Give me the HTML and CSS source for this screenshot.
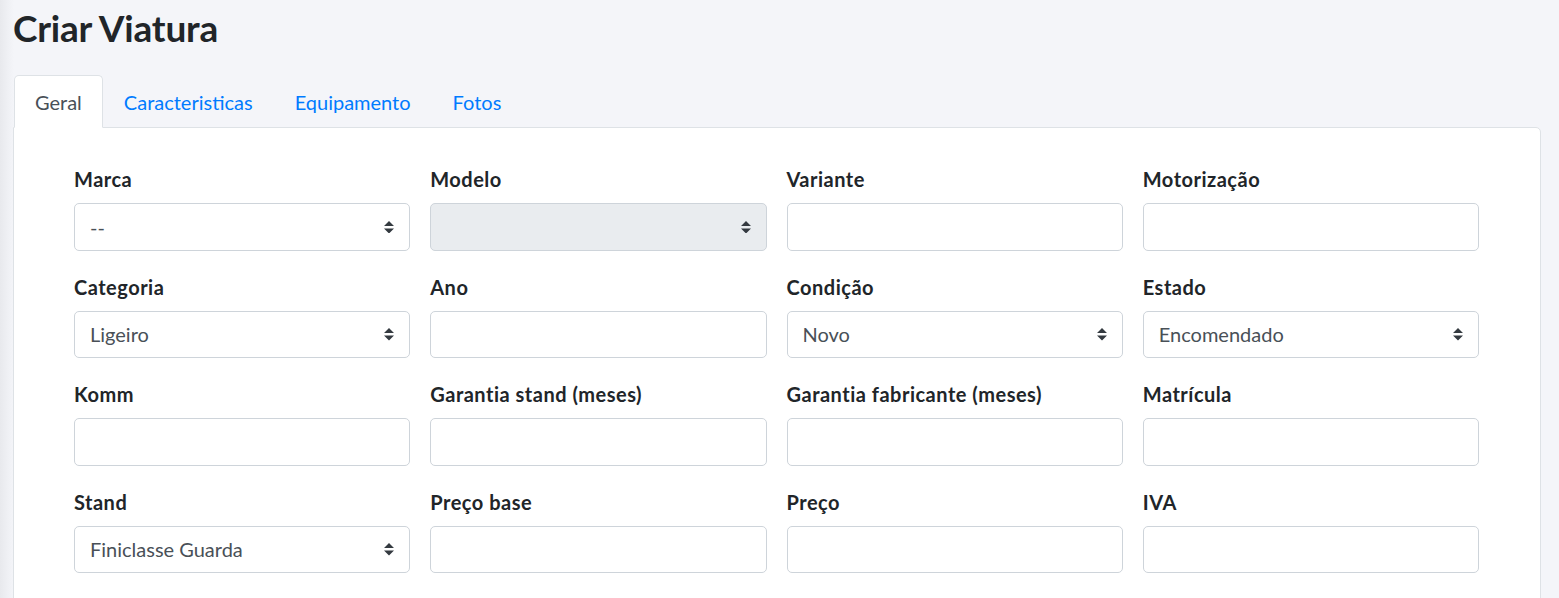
FILE: index.html
```html
<!DOCTYPE html>
<html lang="pt">
<head>
<meta charset="utf-8">
<title>Criar Viatura</title>
<link rel="stylesheet" href="styles.css">
</head>
<body>
<div class="page">
  <h2 class="title">Criar Viatura</h2>
  <ul class="tabs">
    <li class="tab active">Geral</li>
    <li class="tab">Caracteristicas</li>
    <li class="tab">Equipamento</li>
    <li class="tab">Fotos</li>
  </ul>
  <div class="card">
    <div class="grid">
      <div class="group">
        <label class="label">Marca</label>
        <div class="control select"><span>--</span><svg class="caret" viewBox="0 0 4 5" width="10" height="12.5"><path fill="#343a40" d="M2 0L0 2h4zm0 5L0 3h4z"/></svg></div>
      </div>
      <div class="group">
        <label class="label">Modelo</label>
        <div class="control select disabled"><span></span><svg class="caret" viewBox="0 0 4 5" width="10" height="12.5"><path fill="#343a40" d="M2 0L0 2h4zm0 5L0 3h4z"/></svg></div>
      </div>
      <div class="group">
        <label class="label">Variante</label>
        <div class="control"></div>
      </div>
      <div class="group">
        <label class="label">Motorização</label>
        <div class="control"></div>
      </div>

      <div class="group">
        <label class="label">Categoria</label>
        <div class="control select"><span>Ligeiro</span><svg class="caret" viewBox="0 0 4 5" width="10" height="12.5"><path fill="#343a40" d="M2 0L0 2h4zm0 5L0 3h4z"/></svg></div>
      </div>
      <div class="group">
        <label class="label">Ano</label>
        <div class="control"></div>
      </div>
      <div class="group">
        <label class="label">Condição</label>
        <div class="control select"><span>Novo</span><svg class="caret" viewBox="0 0 4 5" width="10" height="12.5"><path fill="#343a40" d="M2 0L0 2h4zm0 5L0 3h4z"/></svg></div>
      </div>
      <div class="group">
        <label class="label">Estado</label>
        <div class="control select"><span>Encomendado</span><svg class="caret" viewBox="0 0 4 5" width="10" height="12.5"><path fill="#343a40" d="M2 0L0 2h4zm0 5L0 3h4z"/></svg></div>
      </div>

      <div class="group">
        <label class="label">Komm</label>
        <div class="control"></div>
      </div>
      <div class="group">
        <label class="label">Garantia stand (meses)</label>
        <div class="control"></div>
      </div>
      <div class="group">
        <label class="label">Garantia fabricante (meses)</label>
        <div class="control"></div>
      </div>
      <div class="group">
        <label class="label">Matrícula</label>
        <div class="control"></div>
      </div>

      <div class="group">
        <label class="label">Stand</label>
        <div class="control select"><span>Finiclasse Guarda</span><svg class="caret" viewBox="0 0 4 5" width="10" height="12.5"><path fill="#343a40" d="M2 0L0 2h4zm0 5L0 3h4z"/></svg></div>
      </div>
      <div class="group">
        <label class="label">Preço base</label>
        <div class="control"></div>
      </div>
      <div class="group">
        <label class="label">Preço</label>
        <div class="control"></div>
      </div>
      <div class="group">
        <label class="label">IVA</label>
        <div class="control"></div>
      </div>
    </div>
  </div>
</div>
</body>
</html>
```

FILE: styles.css
```css
html, body {
  margin: 0;
  padding: 0;
}

body {
  background: linear-gradient(to right, #e8e9ed 0px, #f1f2f6 10px, #f4f5f9 14px) #f4f5f9;
  font-family: Lato, "Noto Sans", sans-serif;
  color: #212529;
  font-size: 20px;
  line-height: 1.5;
  height: 598px;
  overflow: hidden;
}

.page {
  padding: 0 18px 0 13px;
  height: 598px;
  overflow: hidden;
}

.title {
  margin: 0;
  padding-top: 4px;
  height: 47px;
  font-size: 37px;
  font-weight: 700;
  line-height: 47px;
  letter-spacing: -0.2px;
  color: #212529;
  margin-bottom: 24px;
}

.tabs {
  list-style: none;
  margin: 0;
  padding: 0 0 0 1px;
  display: flex;
  position: relative;
  z-index: 1;
}

.tab {
  padding: 11px 20px 10px;
  border: 1px solid transparent;
  border-top-left-radius: 5px;
  border-top-right-radius: 5px;
  color: #007bff;
  line-height: 30px;
  margin-bottom: -1px;
}

.tab.active {
  color: #495057;
  background: #fff;
  border-color: #dee2e6 #dee2e6 #fff;
}

.card {
  background: #fff;
  border: 1px solid #dee2e6;
  border-top-right-radius: 5px;
  padding: 35px 61px 10px 60px;
}

.grid {
  display: grid;
  grid-template-columns: repeat(4, 1fr);
  column-gap: 20px;
}

.group {
  margin-bottom: 20px;
}

.label {
  display: block;
  font-weight: 700;
  line-height: 30px;
  padding-top: 1px;
  margin-bottom: 9px;
  letter-spacing: 0.5px;
}

.control {
  box-sizing: border-box;
  height: 47.5px;
  border: 1px solid #ced4da;
  border-radius: 5px;
  background: #fff;
  padding: 7.5px 15px 7.5px 15px;
  color: #495057;
  line-height: 30px;
}

.select {
  display: flex;
  align-items: center;
  justify-content: space-between;
}

.select.disabled {
  background: #e9ecef;
}

.caret {
  display: block;
  flex: none;
}
```
